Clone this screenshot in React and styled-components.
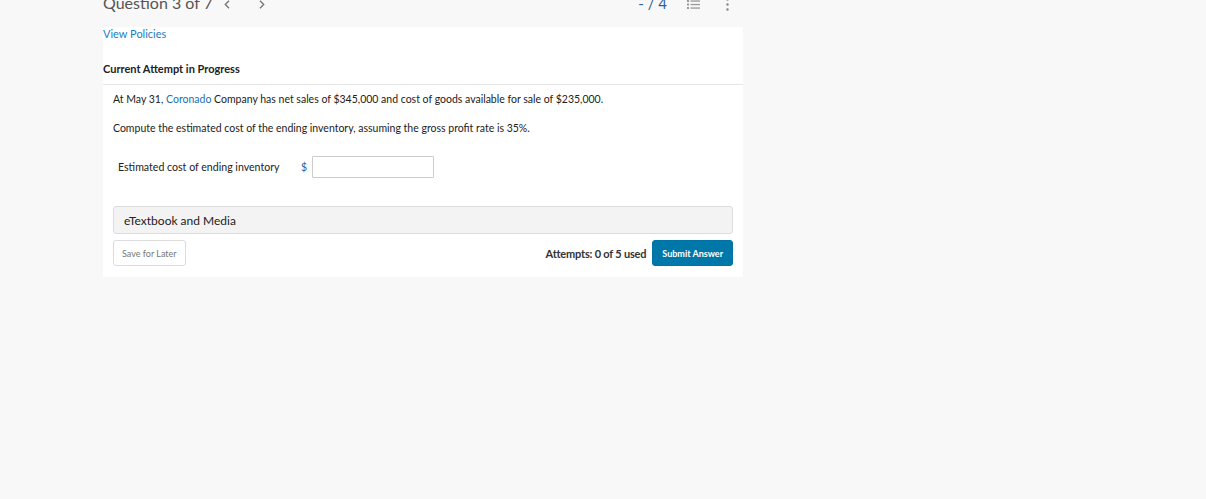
import React from "react";
import styled, { createGlobalStyle } from "styled-components";

const GlobalStyle = createGlobalStyle`
  html, body {
    margin: 0;
    padding: 0;
    background: #f8f8f8;
    font-family: Lato, "Open Sans", sans-serif;
    color: #222;
  }
`;

const Page = styled.div`
  width: 640px;
  margin-left: 103px;
  height: 499px;
  overflow: hidden;
`;

const TopBar = styled.div`
  display: flex;
  align-items: center;
  margin-top: -12px;
  height: 39px;
  padding-bottom: 10px;
  box-sizing: border-box;
`;

const QuestionTitle = styled.div`
  font-size: 16px;
  color: #555;
  width: 121px;
`;

const Chevron = styled.span`
  display: inline-flex;
  width: 35px;
  margin-top: 4px;
`;

const Spacer = styled.div`
  flex: 1;
`;

const Score = styled.span`
  font-size: 15px;
  color: #2a5f9e;
  margin-right: 20px;
`;

const IconSlot = styled.span`
  display: inline-flex;
  margin-top: 3px;
  margin-right: ${p => p.gap || 0}px;
`;

const Card = styled.div`
  background: #fff;
  height: 250px;
`;

const PolicyLink = styled.a`
  display: block;
  font-size: 11px;
  color: #1a7dbf;
  line-height: 14px;
  text-decoration: none;
`;

const AttemptTitle = styled.div`
  font-size: 11px;
  font-weight: 700;
  color: #222;
  margin-top: 21px;
  line-height: 14px;
  padding-bottom: 8px;
  border-bottom: 1px solid #e6e6e6;
`;

const Body = styled.div`
  padding: 0 10px;
`;

const Para = styled.p`
  margin: ${p => p.top}px 0 0;
  font-size: 10.5px;
  line-height: 14px;
  color: #222;
`;

const Blue = styled.span`
  color: #1a6fb0;
`;

const AnswerRow = styled.div`
  display: flex;
  align-items: center;
  margin-top: 21px;
  padding-left: 5px;
`;

const Label = styled.span`
  font-size: 10.6px;
  color: #222;
  width: 183px;
`;

const Dollar = styled.span`
  font-size: 10.5px;
  color: #2a5f9e;
  width: 11px;
`;

const Input = styled.input`
  width: 122px;
  height: 22px;
  box-sizing: border-box;
  border: 1px solid #ccc;
  border-radius: 1px;
  outline: none;
`;

const MediaBar = styled.div`
  margin-top: 28px;
  height: 28px;
  box-sizing: border-box;
  background: #f3f3f3;
  border: 1px solid #dcdcdc;
  border-radius: 3px;
  display: flex;
  align-items: center;
  padding-left: 10px;
  font-size: 12px;
  color: #222;
`;

const Footer = styled.div`
  display: flex;
  align-items: center;
  margin-top: 6px;
`;

const Button = styled.button`
  height: 26px;
  box-sizing: border-box;
  border-radius: 3px;
  font-family: Lato, sans-serif;
  font-size: 9px;
  padding: 0 ${p => (p.primary ? 9 : 8)}px;
  cursor: pointer;
  border: 1px solid ${p => (p.primary ? "#0073a6" : "#dcdcdc")};
  background: ${p => (p.primary ? "#0077a9" : "#fff")};
  color: ${p => (p.primary ? "#fff" : "#777")};
  font-weight: ${p => (p.primary ? 700 : 400)};
`;

const Attempts = styled.span`
  font-size: 11px;
  font-weight: 700;
  color: #333;
  margin-right: 6px;
  letter-spacing: -0.2px;
`;

const ChevronIcon = ({ dir }) => (
  <svg width="6" height="9" viewBox="0 0 6 9">
    <path
      d={dir === "left" ? "M5 0.8 L1.3 4.5 L5 8.2" : "M1 0.8 L4.7 4.5 L1 8.2"}
      fill="none"
      stroke="#777"
      strokeWidth="1.4"
    />
  </svg>
);

const ListIcon = () => (
  <svg width="13" height="9" viewBox="0 0 13 9">
    <g fill="#999">
      <rect x="0" y="0" width="2" height="2" />
      <rect x="0" y="3.5" width="2" height="2" />
      <rect x="0" y="7" width="2" height="2" />
      <rect x="3.5" y="0.4" width="9.5" height="1.3" />
      <rect x="3.5" y="3.9" width="9.5" height="1.3" />
      <rect x="3.5" y="7.4" width="9.5" height="1.3" />
    </g>
  </svg>
);

const DotsIcon = () => (
  <svg width="3" height="13" viewBox="0 0 3 13">
    <g fill="#888">
      <circle cx="1.5" cy="1.5" r="1.2" />
      <circle cx="1.5" cy="6.5" r="1.2" />
      <circle cx="1.5" cy="11.5" r="1.2" />
    </g>
  </svg>
);

export default function App() {
  return (
    <>
      <GlobalStyle />
      <Page>
        <TopBar>
          <QuestionTitle>Question 3 of 7</QuestionTitle>
          <Chevron>
            <ChevronIcon dir="left" />
          </Chevron>
          <Chevron>
            <ChevronIcon dir="right" />
          </Chevron>
          <Spacer />
          <Score>- / 4</Score>
          <IconSlot gap={26}>
            <ListIcon />
          </IconSlot>
          <IconSlot gap={14}>
            <DotsIcon />
          </IconSlot>
        </TopBar>
        <Card>
          <PolicyLink href="#">View Policies</PolicyLink>
          <AttemptTitle>Current Attempt in Progress</AttemptTitle>
          <Body>
            <Para top={7}>
              At May 31, <Blue>Coronado</Blue> Company has net sales of $345,000 and cost of goods
              available for sale of $235,000.
            </Para>
            <Para top={15}>
              Compute the estimated cost of the ending inventory, assuming the gross profit rate is 35%.
            </Para>
            <AnswerRow>
              <Label>Estimated cost of ending inventory</Label>
              <Dollar>$</Dollar>
              <Input type="text" />
            </AnswerRow>
            <MediaBar>eTextbook and Media</MediaBar>
            <Footer>
              <Button>Save for Later</Button>
              <Spacer />
              <Attempts>Attempts: 0 of 5 used</Attempts>
              <Button primary>Submit Answer</Button>
            </Footer>
          </Body>
        </Card>
      </Page>
    </>
  );
}
